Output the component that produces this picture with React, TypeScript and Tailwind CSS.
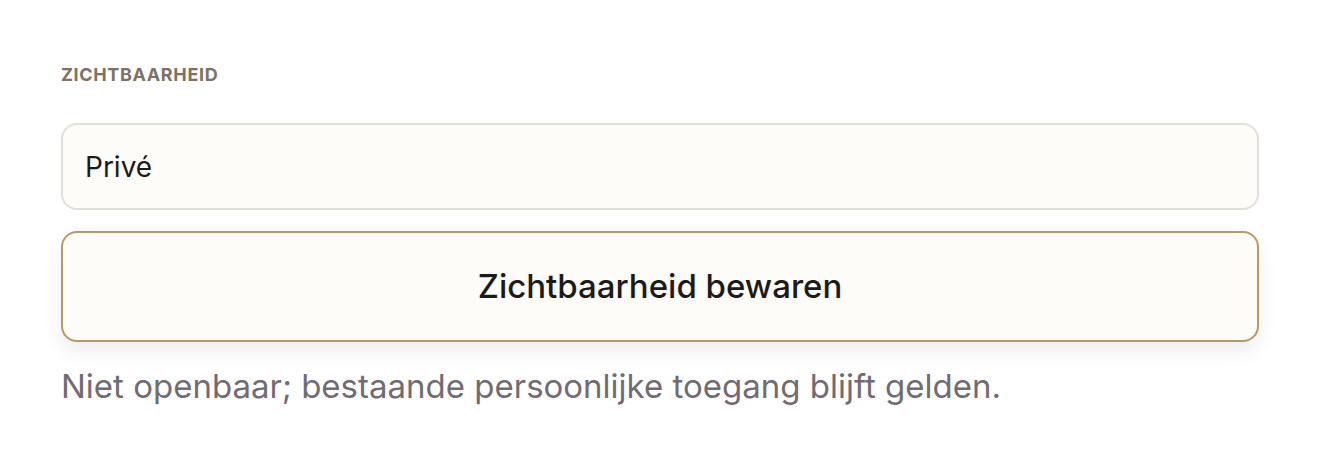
export default function App() {
  return (
    <div className="w-[1320px] h-[474px] bg-white" style={{ fontFamily: "Inter, 'Noto Sans', sans-serif" }}>
      <div className="pl-[61px] pr-[61px] pt-[64px] flex flex-col">
        <div className="text-[18px] font-bold tracking-[0.035em] text-[#7d7264] uppercase leading-[22px]">Zichtbaarheid</div>
        <div className="mt-[37px] h-[87px] rounded-[16px] border-2 border-[#e2dfda] bg-[#fdfcf8] flex items-center px-[22px]">
          <span className="text-[28px] text-[#1c1b19]">Privé</span>
        </div>
        <button className="mt-[21px] h-[111px] rounded-[16px] border-2 border-[#b99a63] bg-[#fdfcf8] flex items-center justify-center shadow-[0_10px_20px_rgba(0,0,0,0.07)]">
          <span className="text-[33px] font-medium text-[#1c1b19]">Zichtbaarheid bewaren</span>
        </button>
        <div className="mt-[22px] text-[33px] text-[#726b73] leading-[44px]">Niet openbaar; bestaande persoonlijke toegang blijft gelden.</div>
      </div>
    </div>
  );
}
